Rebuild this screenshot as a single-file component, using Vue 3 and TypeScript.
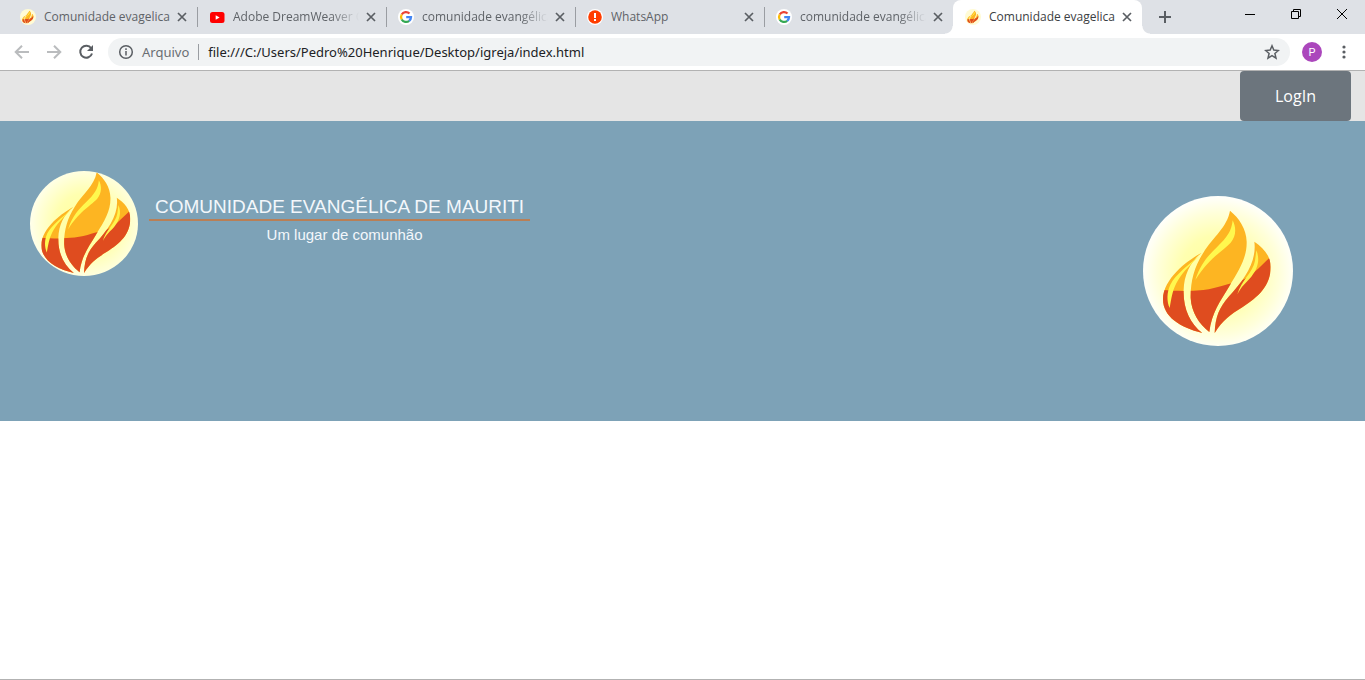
<script setup lang="ts">
import { ref } from 'vue'

type Icon = 'flame' | 'youtube' | 'google' | 'alert'
interface Tab { id: number; title: string; icon: Icon; faded?: boolean }

const tabs = ref<Tab[]>([
  { id: 1, title: 'Comunidade evagelica', icon: 'flame' },
  { id: 2, title: 'Adobe DreamWeaver C', icon: 'youtube', faded: true },
  { id: 3, title: 'comunidade evangélica', icon: 'google', faded: true },
  { id: 4, title: 'WhatsApp', icon: 'alert' },
  { id: 5, title: 'comunidade evangélica', icon: 'google', faded: true },
  { id: 6, title: 'Comunidade evagelica', icon: 'flame' },
])
const activeId = ref(6)
const address = ref('file:///C:/Users/Pedro%20Henrique/Desktop/igreja/index.html')

function closeTab(id: number) {
  tabs.value = tabs.value.filter((t) => t.id !== id)
}
</script>

<template>
  <div class="window">
    <svg class="defs" aria-hidden="true">
      <defs>
        <radialGradient id="glow" gradientUnits="userSpaceOnUse" cx="250" cy="250" r="228">
          <stop offset="0" stop-color="#ffff96" />
          <stop offset="0.5" stop-color="#ffffb0" />
          <stop offset="0.8" stop-color="#ffffda" />
          <stop offset="1" stop-color="#fffffa" />
        </radialGradient>
        <clipPath id="flame-shape">
          <path d="M200 188C165 207 85 262 84 328C84 380 135 413 202 429C165 400 144 355 146 300C147 255 166 215 200 188Z" />
          <path d="M285 62C276 112 235 140 205 188C178 230 166 275 167 324C169 366 192 402 223 426C230 368 255 335 282 290C314 238 336 202 335 155C334 116 312 84 285 62Z" />
          <path d="M358 155C366 214 328 270 281 320C253 352 241 380 239 429C265 389 285 375 322 352C370 320 407 288 407 231C407 197 385 173 358 155Z" />
        </clipPath>
        <g id="flame">
          <g clip-path="url(#flame-shape)">
            <rect x="70" y="50" width="350" height="390" fill="#fdb522" />
            <path d="M70 299C110 303 160 305 205 300C250 294 286 278 310 275C350 262 372 232 410 198V440H70Z" fill="#df4c1f" />
          </g>
          <path d="M193 199C160 229 140 251 124 280C112 303 109 326 104 354C95 334 95 307 106 284C122 254 160 224 193 199Z" fill="#fff84e" />
          <path d="M293 91C304 113 304 137 287 158C260 186 221 205 181 270C197 220 222 194 247 170C276 143 290 123 293 91Z" fill="#fff84e" />
          <path d="M364 181C376 209 368 237 349 260C335 276 318 290 307 313C318 272 354 247 360 212Z" fill="#fff34d" />
        </g>
      </defs>
    </svg>

    <header class="browser">
      <div class="tabstrip">
        <div class="tabs">
          <div v-for="tab in tabs" :key="tab.id" class="tab" :class="{ active: tab.id === activeId }">
            <button type="button" class="tab-main" @click="activeId = tab.id">
              <svg v-if="tab.icon === 'flame'" class="favicon" viewBox="24 18 450 450">
                <circle cx="249" cy="243" r="225" fill="#fffbd5" />
                <use href="#flame" />
              </svg>
              <svg v-else-if="tab.icon === 'youtube'" class="favicon" viewBox="0 0 16 16">
                <rect x="1" y="3" width="14.5" height="11" rx="2.5" fill="#f00" />
                <path d="M6.7 6.2v4.6l3.9-2.3z" fill="#fff" />
              </svg>
              <svg v-else-if="tab.icon === 'google'" class="favicon" viewBox="0 0 16 16">
                <circle cx="8" cy="8" r="8" fill="#fff" />
                <g fill="none" stroke-width="2.3">
                  <path d="M3.7 5.5A5 5 0 0 1 11.5 4.5" stroke="#ea4335" />
                  <path d="M3.7 5.5A5 5 0 0 0 3.7 10.5" stroke="#fbbc05" />
                  <path d="M3.7 10.5A5 5 0 0 0 11.2 11.8" stroke="#34a853" />
                  <path d="M11.2 11.8A5 5 0 0 0 13 8.1H8.2" stroke="#4285f4" />
                </g>
              </svg>
              <svg v-else class="favicon" viewBox="0 0 16 16">
                <circle cx="8" cy="8" r="8" fill="#fff" />
                <circle cx="8" cy="8" r="6.8" fill="#ff3d00" />
                <path d="M7 4h2v5H7zM7 10h2v2H7z" fill="#fff" />
              </svg>
              <span class="title" :class="{ faded: tab.faded }">{{ tab.title }}</span>
            </button>
            <button type="button" class="close" aria-label="Fechar guia" @click="closeTab(tab.id)">
              <svg width="10" height="10" viewBox="0 0 10 10"><path d="M1 1l8 8M9 1L1 9" /></svg>
            </button>
          </div>
        </div>
        <button type="button" class="new-tab" aria-label="Nova guia">
          <svg width="14" height="14" viewBox="0 0 14 14"><path d="M7 1v12M1 7h12" /></svg>
        </button>
        <div class="controls">
          <button type="button" aria-label="Minimizar">
            <svg width="10" height="10" viewBox="0 0 10 10"><path d="M0 5.5h10" /></svg>
          </button>
          <button type="button" aria-label="Restaurar">
            <svg width="10" height="10" viewBox="0 0 10 10"><path d="M.5 2.5h7v7h-7zM2.5 2.5v-2h7v7h-2" /></svg>
          </button>
          <button type="button" aria-label="Fechar">
            <svg width="10" height="10" viewBox="0 0 10 10"><path d="M0 0l10 10M10 0L0 10" /></svg>
          </button>
        </div>
      </div>

      <div class="toolbar">
        <button type="button" class="nav dim" aria-label="Voltar">
          <svg width="16" height="16" viewBox="0 0 16 16"><path d="M15 8H2M8 1.7L1.7 8L8 14.3" /></svg>
        </button>
        <button type="button" class="nav dim" aria-label="Avançar">
          <svg width="16" height="16" viewBox="0 0 16 16"><path d="M1 8h13M8 1.7L14.3 8L8 14.3" /></svg>
        </button>
        <button type="button" class="nav" aria-label="Recarregar">
          <svg width="16" height="16" viewBox="0 0 16 16">
            <path d="M13.2 4.3A6 6 0 1 0 14 9.5" />
            <path class="solid" d="M15 1v6H9z" />
          </svg>
        </button>
        <div class="omnibox">
          <svg class="info" width="16" height="16" viewBox="0 0 16 16">
            <circle cx="8" cy="8" r="6.3" />
            <path d="M8 7v4.5M8 4.3v1.6" />
          </svg>
          <label class="scheme" for="address">Arquivo</label>
          <input id="address" v-model="address" type="text" spellcheck="false" />
          <button type="button" class="star" aria-label="Adicionar aos favoritos">
            <svg width="16" height="16" viewBox="0 0 16 16">
              <path d="M8 1.8l1.8 4.3 4.6.4-3.5 3 1.1 4.6L8 11.7l-4 2.4 1.1-4.6-3.5-3 4.6-.4z" />
            </svg>
          </button>
        </div>
        <button type="button" class="nav" aria-label="Perfil"><span class="avatar">P</span></button>
        <button type="button" class="nav" aria-label="Menu">
          <svg width="16" height="16" viewBox="0 0 16 16">
            <g class="dots"><circle cx="8" cy="3" r="1.6" /><circle cx="8" cy="8" r="1.6" /><circle cx="8" cy="13" r="1.6" /></g>
          </svg>
        </button>
      </div>
    </header>

    <div class="topbar"><button type="button" class="login">LogIn</button></div>

    <main class="page">
      <section class="hero">
        <div class="brand">
          <svg class="logo-small" viewBox="43 57 392 383" preserveAspectRatio="none">
            <rect x="0" y="0" width="500" height="500" fill="url(#glow)" />
            <use href="#flame" />
          </svg>
          <div class="brand-text">
            <h1>COMUNIDADE EVANGÉLICA DE MAURITI</h1>
            <p>Um lugar de comunhão</p>
          </div>
        </div>
        <svg class="logo-large" viewBox="24 18 450 450">
          <rect x="0" y="0" width="500" height="500" fill="url(#glow)" />
          <use href="#flame" />
        </svg>
      </section>
    </main>
  </div>
</template>

<style>
body {
  margin: 0;
  background: #fff;
}
</style>

<style scoped>
.window {
  min-height: 100vh;
  box-sizing: border-box;
  display: flex;
  flex-direction: column;
  border-bottom: 1px solid #b2b2b2;
  font-family: "Open Sans", "Noto Sans", sans-serif;
}
.defs {
  position: absolute;
  width: 0;
  height: 0;
}
button {
  border: 0;
  padding: 0;
  background: none;
  font: inherit;
  color: inherit;
  display: flex;
  align-items: center;
  justify-content: center;
}
svg {
  flex: none;
  fill: none;
}
.tabstrip {
  display: flex;
  height: 34px;
  padding-left: 8px;
  background: #dee1e6;
}
.tabs {
  display: flex;
  flex: 0 1 1134px;
  min-width: 0;
}
.tab {
  position: relative;
  display: flex;
  align-items: center;
  flex: 1 1 0;
  min-width: 0;
  box-sizing: border-box;
  padding: 0 7px 0 12px;
  color: #5f6368;
  font-size: 12px;
}
.tab:not(.active)::after {
  content: "";
  position: absolute;
  right: -1px;
  top: 7px;
  width: 1px;
  height: 20px;
  background: #9a9da2;
}
.tab:has(+ .active)::after {
  display: none;
}
.tab.active {
  background: #fff;
  border-radius: 8px 8px 0 0;
  color: #3c4043;
}
.tab.active::before,
.tab.active::after {
  content: "";
  position: absolute;
  bottom: 0;
  width: 8px;
  height: 8px;
}
.tab.active::before {
  right: 100%;
  background: radial-gradient(circle at 0 0, #dee1e6 7px, #fff 8px);
}
.tab.active::after {
  left: 100%;
  background: radial-gradient(circle at 100% 0, #dee1e6 7px, #fff 8px);
}
.tab-main {
  flex: 1;
  min-width: 0;
  gap: 8px;
  height: 34px;
}
.favicon {
  width: 16px;
  height: 16px;
}
.title {
  flex: 1;
  min-width: 0;
  overflow: hidden;
  white-space: nowrap;
  text-align: left;
  line-height: 18px;
}
.title.faded {
  margin-right: -8px;
  mask-image: linear-gradient(to right, #000 calc(100% - 40px), transparent calc(100% - 12px));
}
.close {
  width: 16px;
  height: 16px;
}
.close path {
  stroke: #5a5e63;
  stroke-width: 1.7;
}
.new-tab {
  width: 28px;
  margin-left: 9px;
}
.new-tab path {
  stroke: #5a5e63;
  stroke-width: 2;
}
.controls {
  display: flex;
  margin-left: auto;
  height: 28px;
}
.controls button {
  width: 46px;
}
.controls path {
  stroke: #000;
}
.toolbar {
  display: flex;
  align-items: center;
  height: 36px;
  padding: 0 5px 0 6px;
  background: #fff;
  border-bottom: 1px solid #b2b2b2;
}
.nav {
  width: 32px;
  height: 32px;
}
.nav path {
  stroke: #5a5e63;
  stroke-width: 2;
}
.nav.dim path {
  stroke: #babcbe;
}
.nav .solid {
  fill: #5a5e63;
  stroke: none;
}
.dots {
  fill: #5a5e63;
}
.omnibox {
  display: flex;
  align-items: center;
  flex: 1;
  min-width: 0;
  height: 28px;
  margin: 0 6px;
  padding: 0 10px;
  box-sizing: border-box;
  border-radius: 14px;
  background: #f1f3f4;
  font-family: "Noto Sans", "Open Sans", sans-serif;
  font-size: 13px;
}
.info circle,
.info path {
  stroke: #5a5e63;
  stroke-width: 1.5;
}
.scheme {
  margin-left: 8px;
  padding-right: 9px;
  border-right: 1px solid #9a9da2;
  line-height: 16px;
  color: #6a6e73;
}
input {
  flex: 1;
  min-width: 0;
  padding: 0;
  margin-left: 9px;
  border: 0;
  outline: 0;
  background: none;
  font: inherit;
  color: #202124;
}
.star path {
  stroke: #5a5e63;
  stroke-width: 1.5;
}
.avatar {
  width: 20px;
  height: 20px;
  border-radius: 50%;
  background: #ab47bc;
  color: #fff;
  font: 11px/21px Roboto, sans-serif;
  text-align: center;
}
.topbar {
  display: flex;
  justify-content: flex-end;
  padding-right: 14px;
  background: #e5e5e5;
}
.login {
  width: 111px;
  height: 50px;
  border-radius: 4px;
  background: #6c757d;
  color: #fff;
  font-size: 16px;
}
.page {
  flex: 1;
}
.hero {
  display: flex;
  justify-content: space-between;
  align-items: flex-start;
  min-height: 300px;
  box-sizing: border-box;
  padding: 50px 72px 0 30px;
  background: #7da2b7;
}
.brand {
  display: flex;
  gap: 11px;
}
.logo-small {
  width: 108px;
  height: 105px;
  border-radius: 50%;
}
.logo-large {
  width: 150px;
  height: 150px;
  margin-top: 25px;
  border-radius: 50%;
}
.brand-text {
  padding-top: 24px;
  font-family: "Liberation Sans", Arial, sans-serif;
  color: #f3f7fb;
}
h1 {
  margin: 0;
  padding: 0 6px;
  border-bottom: 2px solid #b97f56;
  font-size: 19px;
  font-weight: 400;
  line-height: 24px;
}
p {
  margin: 5px 0 0;
  padding-left: 10px;
  font-size: 15px;
  line-height: 18px;
  text-align: center;
}
</style>
